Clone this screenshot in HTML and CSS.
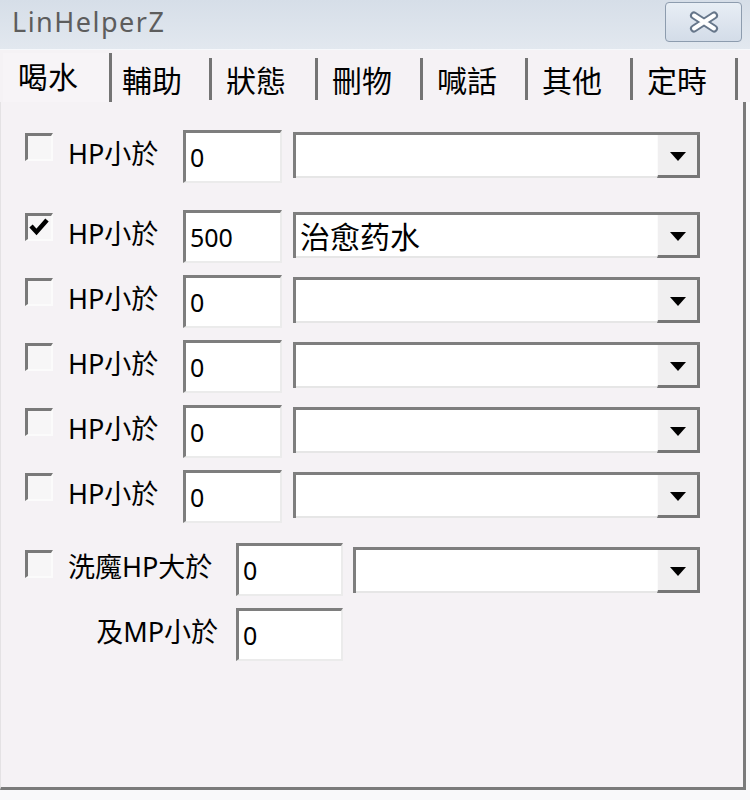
FILE: index.html
```html
<!DOCTYPE html>
<html lang="zh-Hant">
<head>
<meta charset="utf-8">
<title>LinHelperZ</title>
<link rel="stylesheet" href="styles.css">
</head>
<body>
<div class="window">
  <div class="titlebar">
    <span class="title">LinHelperZ</span>
    <button class="close" aria-label="close">
      <svg width="32" height="22" viewBox="0 0 32 22">
        <path d="M6 4.5 L26 17.5 M26 4.5 L6 17.5" stroke="#66768a" stroke-width="8" stroke-linecap="round" fill="none"/>
        <path d="M6 4.5 L26 17.5 M26 4.5 L6 17.5" stroke="#ffffff" stroke-width="4" stroke-linecap="round" fill="none"/>
      </svg>
    </button>
  </div>
  <div class="tabs">
    <div class="tab active">喝水</div>
    <div class="tab t2">輔助</div>
    <div class="tab t3">狀態</div>
    <div class="tab">刪物</div>
    <div class="tab">喊話</div>
    <div class="tab">其他</div>
    <div class="tab">定時</div>
  </div>
  <div class="panel">
    <div class="row">
      <span class="check"></span>
      <span class="label">HP小於</span>
      <span class="input">0</span>
      <span class="combo"><span class="combo-text"></span><span class="combo-btn"><svg width="16" height="9" viewBox="0 0 16 9"><path d="M0 0 H16 L8 9 Z" fill="#000"/></svg></span></span>
    </div>
    <div class="row r2">
      <span class="check"><svg width="23" height="23" viewBox="0 0 23 23"><path d="M3 10 L8.5 16 L19 4" stroke="#000" stroke-width="4.5" fill="none"/></svg></span>
      <span class="label">HP小於</span>
      <span class="input">500</span>
      <span class="combo"><span class="combo-text">治愈药水</span><span class="combo-btn"><svg width="16" height="9" viewBox="0 0 16 9"><path d="M0 0 H16 L8 9 Z" fill="#000"/></svg></span></span>
    </div>
    <div class="row">
      <span class="check"></span>
      <span class="label">HP小於</span>
      <span class="input">0</span>
      <span class="combo"><span class="combo-text"></span><span class="combo-btn"><svg width="16" height="9" viewBox="0 0 16 9"><path d="M0 0 H16 L8 9 Z" fill="#000"/></svg></span></span>
    </div>
    <div class="row">
      <span class="check"></span>
      <span class="label">HP小於</span>
      <span class="input">0</span>
      <span class="combo"><span class="combo-text"></span><span class="combo-btn"><svg width="16" height="9" viewBox="0 0 16 9"><path d="M0 0 H16 L8 9 Z" fill="#000"/></svg></span></span>
    </div>
    <div class="row">
      <span class="check"></span>
      <span class="label">HP小於</span>
      <span class="input">0</span>
      <span class="combo"><span class="combo-text"></span><span class="combo-btn"><svg width="16" height="9" viewBox="0 0 16 9"><path d="M0 0 H16 L8 9 Z" fill="#000"/></svg></span></span>
    </div>
    <div class="row">
      <span class="check"></span>
      <span class="label">HP小於</span>
      <span class="input">0</span>
      <span class="combo"><span class="combo-text"></span><span class="combo-btn"><svg width="16" height="9" viewBox="0 0 16 9"><path d="M0 0 H16 L8 9 Z" fill="#000"/></svg></span></span>
    </div>
    <div class="row r7">
      <span class="check low"></span>
      <span class="label wide">洗魔HP大於</span>
      <span class="input wide">0</span>
      <span class="combo short"><span class="combo-text"></span><span class="combo-btn"><svg width="16" height="9" viewBox="0 0 16 9"><path d="M0 0 H16 L8 9 Z" fill="#000"/></svg></span></span>
    </div>
    <div class="row">
      <span class="label wide right">及MP小於</span>
      <span class="input wide">0</span>
    </div>
  </div>
</div>
</body>
</html>
```

FILE: styles.css
```css
* { box-sizing: border-box; }

html, body {
  margin: 0;
  padding: 0;
  background: #f9f9fa;
}

.window {
  width: 750px;
  height: 800px;
  background: #f9f9fa;
  display: flex;
  flex-direction: column;
  font-family: "Noto Sans", "Noto Sans CJK TC", sans-serif;
  color: #000;
}

.titlebar {
  height: 50px;
  flex: none;
  display: flex;
  align-items: flex-start;
  justify-content: space-between;
  padding: 0 8px 0 12px;
  background: linear-gradient(#d6dee8, #e2e8ef);
  border-bottom: 1px solid #f6f8fb;
}

.title {
  margin-top: 4px;
  font-family: "Noto Sans", sans-serif;
  font-size: 27px;
  line-height: 36px;
  letter-spacing: 1.5px;
  color: #5d5d5d;
}

.close {
  margin-top: 2px;
  width: 77px;
  height: 40px;
  padding: 0;
  border: 1px solid #8d9cae;
  border-radius: 4px;
  background: linear-gradient(#e8eef5, #d3dce8);
  display: flex;
  align-items: center;
  justify-content: center;
}

.tabs {
  height: 52px;
  flex: none;
  display: flex;
  align-items: flex-end;
  padding-left: 3px;
  background: #f5f2f5;
}

.tab {
  height: 42px;
  margin-bottom: 2px;
  width: 105px;
  padding-left: 14px;
  border-right: 3px solid #747474;
  font-family: "Noto Sans CJK TC", sans-serif;
  font-size: 30px;
  line-height: 42px;
  white-space: nowrap;
}

.tab.active {
  height: 49px;
  margin-bottom: 0;
  width: 109px;
  padding-left: 15px;
  line-height: 44px;
  background: #f7f4f7;
}

.tab.t2 {
  width: 100px;
  padding-left: 10px;
}

.tab.t3 {
  width: 106px;
}

.panel {
  width: 746px;
  height: 688px;
  flex: none;
  background: #f5f2f5;
  border-left: 1px solid #e4e2e4;
  border-right: 3px solid #7a7a7a;
  border-bottom: 3px solid #7a7a7a;
  padding-top: 28px;
}

.row {
  display: flex;
  align-items: flex-start;
  height: 52px;
  margin-top: 13px;
}

.row:first-child { margin-top: 0; }
.row.r2 { margin-top: 28px; }
.row.r7 { margin-top: 21px; }

.check {
  flex: none;
  width: 28px;
  height: 28px;
  margin-top: 3px;
  margin-left: 24px;
  border-top: 3px solid #797979;
  border-left: 3px solid #797979;
  border-right: 2px solid #fbfbfb;
  border-bottom: 2px solid #fbfbfb;
  background: #f7f6f7;
  display: flex;
}

.check.low { margin-top: 7px; }

.label {
  flex: none;
  margin-left: 15px;
  width: 115px;
  font-size: 27px;
  line-height: 47px;
  white-space: nowrap;
}

.label.wide { width: 168px; }

.label.right {
  margin-left: 67px;
  text-align: right;
  padding-right: 18px;
}

.input {
  flex: none;
  width: 99px;
  height: 53px;
  border-top: 3px solid #7e7e7e;
  border-left: 3px solid #7e7e7e;
  border-right: 2px solid #ebebeb;
  border-bottom: 2px solid #ebebeb;
  background: #fff;
  padding-left: 4px;
  font-family: "Noto Sans", sans-serif;
  font-size: 25px;
  line-height: 48px;
}

.input.wide { width: 107px; }

.combo {
  flex: none;
  display: flex;
  margin-left: 11px;
  margin-top: 2px;
  width: 407px;
  height: 46px;
  border-top: 3px solid #7e7e7e;
  border-left: 3px solid #7e7e7e;
  background: #fff;
}

.combo.short {
  width: 347px;
  margin-left: 10px;
  margin-top: 4px;
}

.combo-text {
  flex: 1;
  padding-left: 4px;
  font-family: "Noto Sans CJK TC", sans-serif;
  font-size: 30px;
  line-height: 40px;
  border-bottom: 2px solid #e6e6e6;
  white-space: nowrap;
}

.combo-btn {
  flex: none;
  width: 43px;
  background: #f0eff0;
  border-left: 1px solid #fbfbfb;
  border-right: 3px solid #767676;
  border-bottom: 3px solid #767676;
  display: flex;
  align-items: center;
  justify-content: center;
  padding-top: 2px;
}
```
